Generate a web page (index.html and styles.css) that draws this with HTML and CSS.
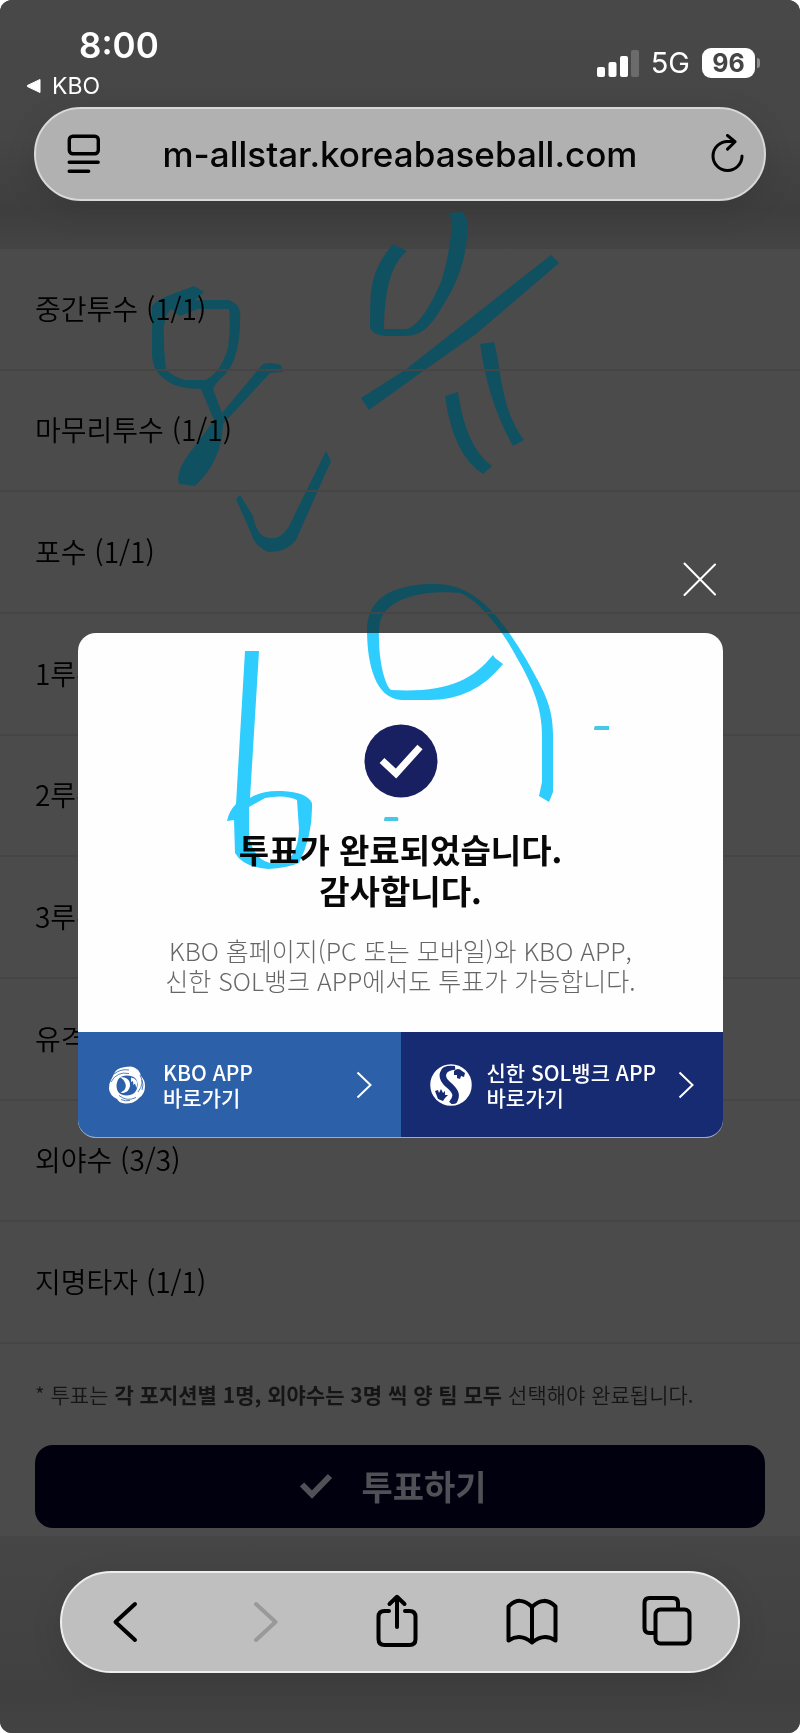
FILE: index.html
```html
<!DOCTYPE html>
<html lang="ko">
<head>
<meta charset="utf-8">
<meta name="viewport" content="width=device-width, initial-scale=1">
<title>KBO 올스타 투표</title>
<link rel="stylesheet" href="styles.css">
</head>
<body>
<div class="screen">
  <header class="top">
    <div class="status">
      <div class="status-left">
        <time class="clock">8:00</time>
        <a class="back-app" href="#"><svg width="16" height="16" viewBox="0 0 16 16" aria-hidden="true"><path d="M14 1.5v13L1.5 8.6q-1-.6 0-1.200z" fill="#fff" stroke="#fff" stroke-linejoin="round"/></svg>KBO</a>
      </div>
      <div class="status-right">
        <svg class="signal" width="42" height="27" viewBox="0 0 42 27" aria-hidden="true"><g fill="#fff"><rect x="0" y="17" width="8" height="10" rx="2"/><rect x="11.500" y="12" width="8" height="15" rx="2"/><rect x="23" y="6" width="8" height="21" rx="2"/><rect x="34" y="0" width="8" height="27" rx="2" opacity=".2"/></g></svg>
        <span class="network">5G</span>
        <span class="battery"><span class="battery-level">96</span><span class="battery-cap"></span></span>
      </div>
    </div>
    <div class="address">
      <button class="icon-button" type="button" aria-label="페이지 메뉴"><svg width="34" height="40" viewBox="0 0 34 40" fill="none" stroke="#000" stroke-width="3.400" stroke-linecap="round"><rect x="2.300" y="2.200" width="29" height="17.500" rx="3.500"/><path d="M2.200 28.300h29M2.200 37.300h19.500"/></svg></button>
      <span class="url">m-allstar.koreabaseball.com</span>
      <button class="icon-button" type="button" aria-label="새로고침"><svg width="34" height="40" viewBox="0 0 34 40" fill="none" stroke="#000" stroke-width="3" stroke-linecap="round" stroke-linejoin="round"><path d="M31 22A14.500 14.500 0 1 1 16.500 7.500h6M16.500 1.500l7.500 6.200-7.500 7.400"/></svg></button>
    </div>
  </header>

  <main class="page">
    <ul class="positions">
      <li>중간투수 (1/1)</li>
      <li>마무리투수 (1/1)</li>
      <li>포수 (1/1)</li>
      <li>1루수 (1/1)</li>
      <li>2루수 (1/1)</li>
      <li>3루수 (1/1)</li>
      <li>유격수 (1/1)</li>
      <li>외야수 (3/3)</li>
      <li>지명타자 (1/1)</li>
    </ul>
    <p class="note">* 투표는 <strong>각 포지션별 1명, 외야수는 3명 씩 양 팀 모두</strong> 선택해야 완료됩니다.</p>
    <button class="vote" type="button"><svg width="34" height="26" viewBox="0 0 34 26" aria-hidden="true"><path d="M3 11.500 13 21.500 31 3" fill="none" stroke="#505057" stroke-width="6"/></svg>투표하기</button>
  </main>

  <footer class="bottom">
    <nav class="toolbar" aria-label="브라우저 도구">
      <button class="icon-button" type="button" aria-label="뒤로"><svg width="52" height="52" viewBox="0 0 52 52"><path d="M35 8 15.500 26 35 44"/></svg></button>
      <button class="icon-button" type="button" aria-label="앞으로" disabled><svg width="52" height="52" viewBox="0 0 52 52"><path d="M21 8 40.500 26 21 44"/></svg></button>
      <button class="icon-button" type="button" aria-label="공유"><svg width="52" height="52" viewBox="0 0 52 52"><path d="M18 15h-4.500q-6 0-6 6v22q0 6 6 6h25q6 0 6-6V21q0-6-6-6H34M26 31V1M18.500 8 26 .800 33.500 8"/></svg></button>
      <button class="icon-button" type="button" aria-label="책갈피"><svg width="52" height="52" viewBox="0 0 52 52"><path d="M26 10.500v36M26 11Q14-1 2.500 10.500V44.500Q14 36.500 26 46.500 38 36.500 49.500 44.500V10.500Q38-1 26 11z"/></svg></button>
      <button class="icon-button" type="button" aria-label="탭"><svg width="52" height="52" viewBox="0 0 52 52"><path d="M13 37H8.500q-5 0-5-5V7q0-5 5-5H32q5 0 5 5v5.500"/><rect x="14.500" y="13.500" width="34" height="34" rx="5"/></svg></button>
    </nav>
  </footer>

  <div class="overlay">
    <button class="close" type="button" aria-label="닫기"><svg width="34" height="34" viewBox="0 0 34 34"><path d="M1.500 1.500 32 32.500M32 2.500 1.500 33" stroke="#fff" stroke-width="2" stroke-linecap="round"/></svg></button>
    <section class="modal" role="dialog" aria-labelledby="done">
      <div class="modal-body">
        <svg class="done-icon" width="74" height="74" viewBox="0 0 74 74" aria-hidden="true"><circle cx="37" cy="37" r="36.500" fill="#182062"/><path d="M18 36.500 32 49.500 56 23" fill="none" stroke="#fff" stroke-width="7"/></svg>
        <h1 id="done">투표가 완료되었습니다.<br>감사합니다.</h1>
        <p>KBO 홈페이지(PC 또는 모바일)와 KBO APP,<br>신한 SOL뱅크 APP에서도 투표가 가능합니다.</p>
      </div>
      <div class="apps">
        <a class="app app-kbo" href="#">
          <svg width="40" height="40" viewBox="0 0 40 40" aria-hidden="true">
            <path d="M6 11Q8 3 18 2l5-.5Q30 2 33 8l1 3q4 4 4 10 0 8-6 12l-2 2q-5 4-12 3.500-6-.5-8-4.500Q3 31 2 24q-.5-5 2-9z" fill="#fff"/>
            <path d="M20 10.500C27 10.500 31 14 30.500 20.500 30 27 26 30.500 19.500 30.500 13 30.500 9.500 27 9.500 20.500 10 14 13 10.500 20 10.500z" fill="#2c60a8"/>
            <path d="M13 12.500C19 11 23.500 15 23 20.500 22.500 26 18 29 13.500 27.500 17.500 26 19.500 23 18.500 19 17.500 15.500 15.500 13.500 13 12.500zM24 12.500q8 1 5.500 10.500L28 18.500 26.500 20 26 16l-2 1z" fill="#fff"/>
            <path d="M4 17Q10 6 22 8.500M7 9Q14 3.500 22 5M33 10q5 8-2 17M35 15q2 5 0 10M29 32.500q-9 4.500-17-2M23 35.500q-5 1-9-1" fill="none" stroke="#2c60a8" stroke-width=".8"/>
          </svg>
          <span class="app-name">KBO APP<br>바로가기</span>
          <svg class="arrow" width="16" height="28" viewBox="0 0 16 28" aria-hidden="true"><path d="m1.500 1.500 13 12.500-13 12.500"/></svg>
        </a>
        <a class="app app-sol" href="#">
          <svg width="42" height="42" viewBox="0 0 42 42" aria-hidden="true">
            <circle cx="21" cy="21" r="20" fill="#fff"/>
            <path d="M25 2.500C11 4 10 13 17.500 20 25.500 26.500 29 32 21.500 40" fill="none" stroke="#172b73" stroke-width="6.500"/>
            <path d="M24 7Q28 3 32 7l3 2-1 4-3-1-1 3-3-1 0-3-3 0zM5 27l3-1 1 3 2-4 2 4 2-2 0 4 3 0-3 3-2 3-5-2z" fill="#172b73"/>
            <circle cx="21" cy="21" r="20" fill="none" stroke="#fff" stroke-width="1.500"/>
          </svg>
          <span class="app-name">신한 SOL뱅크 APP<br>바로가기</span>
          <svg class="arrow" width="16" height="28" viewBox="0 0 16 28" aria-hidden="true"><path d="m1.500 1.500 13 12.500-13 12.500"/></svg>
        </a>
      </div>
    </section>
  </div>

  <svg class="ink ink-dim" viewBox="0 0 800 1733" aria-hidden="true">
    <defs>
      <clipPath id="outside"><path clip-rule="evenodd" d="M0 0H800V1733H0zM78 633H723V1137H78z"/></clipPath>
      <clipPath id="inside"><rect x="78" y="633" width="645" height="504"/></clipPath>
      <path id="nine" d="M495 658 503 664Q473 702 424 700H402C374 699 367 661 367 629 368 602 386 585 432 584 478 582 504 623 526 659 544 691 553 706 553 735V792L549 802 539 796 542 782V735C542 710 534 687 517 658 503 631 479 600 460 593 443 591 381 590 379 629 378 657 384 684 391 690 444 693 471 682 493 655z"/>
    </defs>
    <g fill="#105161">
      <path fill-rule="evenodd" d="M152 306Q158 299 170 295L194 286 204 292 195 300H228Q242 304 240 319 240 364 220 379 216 383 213 389L222 413 262 365Q268 361 281 365L283 372 270 373 223 424Q222 461 195 486L179 484Q175 474 188 455 202 437 214 420L201 389Q177 389 166 380 152 371 152 354zM171 309Q166 314 164 325 163 346 166 369 171 376 185 380H205Q220 374 228 348 231 326 229 309H198L180 316z"/>
      <path d="M236 499 240 495 253 516Q257 537 269 538 283 540 291 522L326 451 331 461 323 479 296 540Q286 553 268 552 254 546 251 533z"/>
      <path d="M393 244 407 251Q384 269 384 329H405C419 329 434 298 441 282 449 257 451 238 452 219L448 213 463 212 468 222C467 260 457 284 442 307 428 331 419 336 403 336H385Q371 334 370 327C371 295 367 275 393 244z"/>
      <path d="M361 398 405 370 551 255 559 263 476 334 426 369 369 410zM480 344 494 342C502 371 500 408 524 440L513 446Q488 402 480 344zM445 396 458 392Q466 448 492 466L483 474Q453 455 445 396z"/>
      <use href="#nine" clip-path="url(#outside)"/>
    </g>
  </svg>
  <svg class="ink ink-bright" viewBox="0 0 800 1733" aria-hidden="true">
    <g fill="#2fcdff">
      <use href="#nine" clip-path="url(#inside)"/>
      <path fill-rule="evenodd" d="M245 651H259L250 798Q262 790 282 791 307 792 312 803 313 835 299 863 287 868 268 869 243 867 235 853L234 820 227 821Q229 811 236 804zM249 807V835Q253 859 270 863L282 863Q298 857 299 829L297 800Q285 794 265 798z"/>
      <path d="M385 817h12q2 0 1 4h-14q0-3 1-4zM595 726h14v4h-15q0-3 1-4z" fill="#48c8e8"/>
    </g>
  </svg>
</div>
</body>
</html>
```

FILE: styles.css
```css
* { box-sizing: border-box; }

body {
  margin: 0;
  background: #fff;
  font-family: "Noto Sans CJK KR", sans-serif;
}

button {
  padding: 0;
  border: 0;
  background: none;
  font: inherit;
}

a { color: inherit; text-decoration: none; }
svg { display: block; flex: none; }

.screen {
  position: relative;
  display: flex;
  flex-direction: column;
  min-height: 100vh;
  overflow: hidden;
  border-radius: 12px;
  background: #4b4b4b;
}

.top {
  height: 249px;
  padding: 24px 34px 0;
  background: linear-gradient(#484848, #464646 55%, #3e3e3e 84%, #444);
  font-family: Inter, sans-serif;
}

.status {
  display: flex;
  justify-content: space-between;
  height: 83px;
  color: #fff;
}

.clock {
  display: block;
  padding-left: 45px;
  font-size: 35px;
  font-weight: 600;
  line-height: 42px;
}

.back-app {
  display: flex;
  align-items: center;
  gap: 10px;
  margin-left: -8px;
  font-size: 23px;
  line-height: 40px;
}

.status-right {
  display: flex;
  align-items: center;
  gap: 12px;
  height: 30px;
  margin: 24px 6px 0 0;
}

.network { font-size: 29px; line-height: 30px; }
.battery { display: flex; align-items: center; gap: 2px; }

.battery-level {
  width: 53px;
  border-radius: 9px;
  background: #fff;
  color: #454545;
  font-size: 25px;
  font-weight: 700;
  line-height: 30px;
  text-align: center;
}

.battery-cap {
  width: 3px;
  height: 10px;
  border-radius: 0 3px 3px 0;
  background: #8d8d8d;
}

.address {
  display: flex;
  align-items: center;
  justify-content: space-between;
  height: 94px;
  padding: 0 19px;
  border: 2px solid #d8d8d8;
  border-radius: 47px;
  background: #b1b1b1;
  box-shadow: 0 8px 32px rgba(0, 0, 0, .1);
}

.address .icon-button { padding-left: 12px; }

.url {
  color: #050505;
  font-size: 35px;
  font-weight: 500;
  line-height: 44px;
}

.page {
  position: relative;
  z-index: 1;
  flex: 1;
}

.positions {
  display: grid;
  grid-auto-rows: 1fr;
  min-height: 1095px;
  margin: 0;
  padding: 0;
  list-style: none;
}

.positions li {
  display: flex;
  align-items: center;
  padding: 0 35px 2px;
  border-bottom: 2px solid #454545;
  color: #000;
  font-size: 28px;
  font-weight: 350;
  line-height: 40px;
}

.note {
  margin: 0;
  padding: 35px 35px 36px;
  color: #151515;
  font-size: 21px;
  font-weight: 350;
  line-height: 30px;
}

.vote {
  display: flex;
  align-items: center;
  justify-content: center;
  gap: 28px;
  width: calc(100% - 70px);
  height: 83px;
  margin: 0 35px 8px;
  padding: 0 14px 2px 0;
  border-radius: 18px;
  background: #00000f;
  color: #505057;
  font-size: 34px;
  font-weight: 700;
}

.bottom {
  height: 197px;
  padding: 35px 60px 0;
  background: linear-gradient(#464646, #404040 80%, #434343);
}

.toolbar {
  display: flex;
  align-items: center;
  justify-content: space-between;
  height: 102px;
  padding: 0 45px 0 38px;
  border: 2px solid #eee;
  border-radius: 51px;
  background: #bfbfbf;
  box-shadow: 0 8px 32px rgba(0, 0, 0, .1);
}

.toolbar path,
.toolbar rect {
  fill: none;
  stroke: #000;
  stroke-width: 4;
  stroke-linecap: round;
  stroke-linejoin: round;
}

.toolbar svg { overflow: visible; }
.toolbar :disabled path { stroke: #999; }

.overlay {
  position: absolute;
  z-index: 2;
  top: 562px;
  right: 77px;
  left: 78px;
}

.close { display: block; margin: 0 6px 37px auto; }

.modal {
  overflow: hidden;
  border-bottom: 1px solid #9bacd0;
  border-radius: 18px;
  background: #fefefe;
}

.modal-body {
  display: flex;
  flex-direction: column;
  align-items: center;
  height: 399px;
  padding-top: 91px;
  text-align: center;
}

.modal h1 {
  margin: 31px 0 24px;
  color: #080808;
  font-size: 33px;
  font-weight: 700;
  line-height: 41px;
}

.modal p {
  margin: 0;
  color: #666;
  font-size: 25px;
  font-weight: 300;
  line-height: 30px;
}

.apps { display: grid; grid-template-columns: 1fr 1fr; }

.app {
  display: flex;
  align-items: center;
  gap: 15px;
  height: 105px;
  padding: 0 29px;
  color: #fff;
}

.app-kbo { gap: 16px; background: #2c60a8; }
.app-sol { background: #172b73; }

.app-name {
  flex: 1;
  font-size: 21px;
  font-weight: 500;
  line-height: 25px;
  white-space: nowrap;
}

.arrow path { fill: none; stroke: #fff; stroke-width: 2; }

.ink {
  position: absolute;
  top: 0;
  left: 0;
  width: 100%;
  pointer-events: none;
}

.ink-bright {
  z-index: 3;
  mix-blend-mode: multiply;
}
```
